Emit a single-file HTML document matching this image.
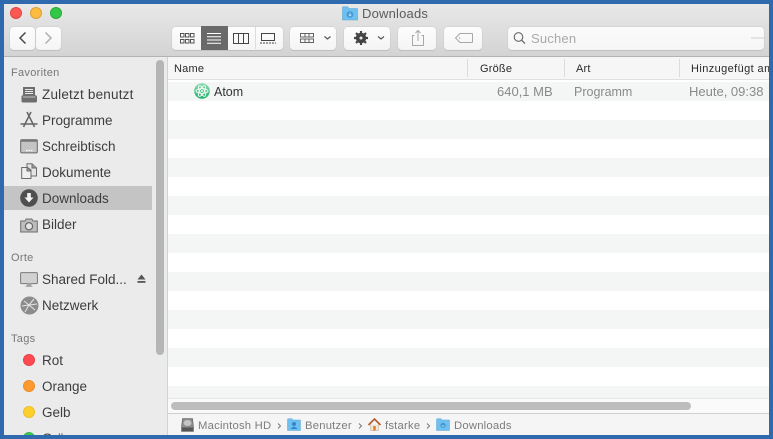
<!DOCTYPE html>
<html><head><meta charset="utf-8">
<style>
*{box-sizing:border-box}
html,body{margin:0;padding:0;width:773px;height:439px;overflow:hidden;background:#2f69ae;font-family:"Liberation Sans",sans-serif}
.a{position:absolute}
#root{position:absolute;left:0;top:0;width:773px;height:439px;overflow:hidden;filter:blur(.25px)}
.btn{position:absolute;top:27px;height:23px;background:linear-gradient(#fdfdfd,#f4f4f4);border-radius:4px;box-shadow:0 0 0 .5px #cbcbcb,0 1px 0 #b5b5b5}
.t{position:absolute;white-space:nowrap;font-size:13.5px;color:#3d3d3d;line-height:16px}
.h{position:absolute;top:62px;font-size:11px;color:#2a2a2a;line-height:14px;white-space:nowrap;letter-spacing:.2px}
.g{position:absolute;font-size:11px;color:#777;line-height:14px;white-space:nowrap;letter-spacing:.3px}
.c{position:absolute;font-size:13px;color:#8a8a8a;line-height:16px;white-space:nowrap;top:84px}
.st{position:absolute;left:168px;width:601px;height:19px;background:#f4f5f5}
.tag{position:absolute;left:23px;width:12px;height:12px;border-radius:50%}
.p{position:absolute;font-size:11.3px;color:#7d7d7d;line-height:14px;white-space:nowrap;top:419px;letter-spacing:.2px}
svg{position:absolute;overflow:visible}
</style></head><body>
<div id="root">
<div class="a" style="left:4px;top:4px;width:765px;height:431px;background:#fff"></div>
<!-- toolbar -->
<div class="a" style="left:4px;top:4px;width:765px;height:53px;background:linear-gradient(#e8e8e8,#d3d3d3);border-bottom:1px solid #b3b3b3"></div>
<div class="a" style="left:10px;top:7px;width:12px;height:12px;border-radius:50%;background:#fc5753;border:.5px solid #df4744"></div>
<div class="a" style="left:30px;top:7px;width:12px;height:12px;border-radius:50%;background:#fdbc40;border:.5px solid #de9f34"></div>
<div class="a" style="left:50px;top:7px;width:12px;height:12px;border-radius:50%;background:#33c748;border:.5px solid #27aa35"></div>
<!-- title -->
<svg style="left:342px;top:6px" width="16" height="15" viewBox="0 0 16 15"><path d="M0.5 3V1.5Q0.5 .8 1.2 .8H5.5L7 2.5H15.5V14H0.5Z" fill="#6fc0ee" stroke="#5aa7d6" stroke-width=".6"/><circle cx="8" cy="8.5" r="3.3" fill="#3f97d6"/><path d="M6.6 8.5 8 10 9.4 8.5M8 6.5V9.5" stroke="#c4e6f8" stroke-width=".8" fill="none"/></svg>
<div class="t" style="left:362px;top:6px;font-size:13px;color:#5c5c5c;letter-spacing:.2px">Downloads</div>
<!-- back/forward -->
<div class="btn" style="left:10px;width:25px"></div>
<div class="btn" style="left:36px;width:25px"></div>
<svg style="left:10px;top:26px" width="52" height="24"><path d="M15.5 6.5 10 12 15.5 17.5" fill="none" stroke="#4a4a4a" stroke-width="1.5"/><path d="M35.5 6.5 41 12 35.5 17.5" fill="none" stroke="#b0b0b0" stroke-width="1.5"/></svg>
<!-- view segment -->
<div class="btn" style="left:172px;width:111px"></div>
<div class="a" style="left:201px;top:26px;width:27px;height:24px;background:#696969"></div>
<div class="a" style="left:255px;top:27px;width:1px;height:22px;background:#dcdcdc"></div>
<svg style="left:172px;top:26px" width="111" height="24">
<g fill="none" stroke="#555" stroke-width="1"><rect x="8.5" y="7.5" width="3.5" height="3.5"/><rect x="13.5" y="7.5" width="3.5" height="3.5"/><rect x="18.5" y="7.5" width="3.5" height="3.5"/><rect x="8.5" y="13.5" width="3.5" height="3.5"/><rect x="13.5" y="13.5" width="3.5" height="3.5"/><rect x="18.5" y="13.5" width="3.5" height="3.5"/></g>
<path d="M35 7.5H49M35 10.8H49M35 14H49M35 17.2H49" stroke="#fff" stroke-width="1"/>
<g fill="none" stroke="#444" stroke-width="1"><rect x="61.5" y="7.5" width="15" height="10"/><path d="M66.5 7.5V17.5M71.5 7.5V17.5"/></g>
<g fill="none" stroke="#444" stroke-width="1"><rect x="89.5" y="7.5" width="13" height="7"/></g><path d="M88 17H104" stroke="#444" stroke-dasharray="2 1"/>
</svg>
<!-- arrange -->
<div class="btn" style="left:290px;width:46px"></div>
<svg style="left:290px;top:26px" width="46" height="24"><g fill="none" stroke="#555" stroke-width=".9"><rect x="10.5" y="7.5" width="13" height="3.5"/><rect x="10.5" y="13" width="13" height="3.5"/><path d="M15 7.5V11M19 7.5V11M15 13V16.5M19 13V16.5"/></g><path d="M34.5 10.5 37.5 13 40.5 10.5" fill="none" stroke="#555" stroke-width="1.2"/></svg>
<!-- action -->
<div class="btn" style="left:344px;width:46px"></div>
<svg style="left:344px;top:26px" width="46" height="24"><circle cx="17" cy="12" r="4" fill="#444" stroke="#444" stroke-width="2.5"/><path d="M17 5V19M10 12H24M12 7 22 17M22 7 12 17" stroke="#444" stroke-width="2.2"/><circle cx="17" cy="12" r="1.5" fill="#e8e8e8"/><path d="M34 10.5 37 13 40 10.5" fill="none" stroke="#555" stroke-width="1.2"/></svg>
<!-- share -->
<div class="btn" style="left:398px;width:38px"></div>
<svg style="left:398px;top:26px" width="38" height="24"><path d="M16.5 9.5H14.5V19.5H25.5V9.5H23.5M20 15V4.5M17.5 7 20 4.5 22.5 7" fill="none" stroke="#a8a8a8" stroke-width="1"/></svg>
<!-- tag -->
<div class="btn" style="left:444px;width:38px"></div>
<svg style="left:444px;top:26px" width="38" height="24"><path d="M11.5 12 16 7.5H28Q28.5 7.5 28.5 8V16Q28.5 16.5 28 16.5H16Z" fill="none" stroke="#a8a8a8" stroke-width="1" stroke-linejoin="round"/><circle cx="15.5" cy="12" r=".8" fill="#a8a8a8"/></svg>
<!-- search -->
<div class="btn" style="left:508px;width:256px;background:linear-gradient(#fbfbfb,#f5f5f5)"></div>
<svg style="left:508px;top:26px" width="256" height="24"><circle cx="10.5" cy="11" r="4.3" fill="none" stroke="#666" stroke-width="1.1"/><path d="M13.6 14.2 17 17.6" stroke="#666" stroke-width="1.3"/><path d="M243 12H256" stroke="#d0d0d0"/></svg>
<div class="t" style="left:531px;top:31px;color:#a9a9a9;font-size:13px;letter-spacing:.2px">Suchen</div>

<!-- sidebar -->
<div class="a" style="left:4px;top:57px;width:163px;height:378px;background:#ebebeb"></div>
<div class="a" style="left:167px;top:57px;width:1px;height:378px;background:#d2d2d2"></div>
<div class="a" style="left:156px;top:60px;width:8px;height:295px;border-radius:4px;background:#b5b5b5"></div>
<div class="a" style="left:4px;top:186px;width:148px;height:24px;background:#c4c4c4"></div>
<div class="g" style="left:11px;top:66px">Favoriten</div>
<div class="g" style="left:11px;top:251px">Orte</div>
<div class="g" style="left:11px;top:332px">Tags</div>
<div class="t" style="left:42px;top:87px;letter-spacing:.2px">Zuletzt benutzt</div>
<div class="t" style="left:42px;top:113px">Programme</div>
<div class="t" style="left:42px;top:139px">Schreibtisch</div>
<div class="t" style="left:42px;top:165px">Dokumente</div>
<div class="t" style="left:42px;top:191px">Downloads</div>
<div class="t" style="left:42px;top:217px">Bilder</div>
<div class="t" style="left:42px;top:272px">Shared Fold...</div>
<div class="t" style="left:42px;top:298px">Netzwerk</div>
<div class="t" style="left:42px;top:353px">Rot</div>
<div class="t" style="left:42px;top:379px">Orange</div>
<div class="t" style="left:42px;top:405px">Gelb</div>
<div class="t" style="left:42px;top:431px">Grün</div>
<!-- sidebar icons -->
<svg style="left:20px;top:85px" width="20" height="20" viewBox="0 0 20 20"><path d="M3 2H15V10L17 11V16Q17 17.5 15 17.5H3Q1.5 17.5 1.5 16V11L3 10Z" fill="#6e6e6e"/><path d="M5 4.5H13M5 6.5H13M5 8.5H13" stroke="#e8e8e8" stroke-width="1"/><path d="M3 12H15.5" stroke="#e8e8e8" stroke-width=".7"/></svg>
<svg style="left:20px;top:111px" width="20" height="18" viewBox="0 0 20 18"><path d="M7 1 14.5 16M11 1 3.5 16M.5 13H17.5" fill="none" stroke="#666" stroke-width="1.5"/></svg>
<svg style="left:20px;top:139px" width="18" height="15" viewBox="0 0 18 15"><rect x=".7" y=".7" width="16.6" height="13.2" rx="1" fill="#c4c4c4" stroke="#666" stroke-width="1"/><rect x="1.2" y="1.2" width="15.6" height="1.5" fill="#6f6f6f"/><path d="M6 11.5H13" stroke="#fff" stroke-width="1.2" stroke-dasharray="1.5 1"/></svg>
<svg style="left:21px;top:163px" width="17" height="17" viewBox="0 0 17 17"><path d="M6 .7H11L15.5 5V13H10V7L6 4Z" fill="#e4e4e4" stroke="#6c6c6c"/><path d="M11 .7V5H15.5" fill="#9a9a9a" stroke="#6c6c6c"/><path d="M.7 4.5H6L10 8V15.5H.7Z" fill="#efefef" stroke="#6c6c6c"/><path d="M6 4.5V8H10" fill="#9a9a9a" stroke="#6c6c6c"/></svg>
<svg style="left:20px;top:189px" width="18" height="18" viewBox="0 0 18 18"><circle cx="9" cy="9" r="8.8" fill="#4f4f4f"/><path d="M7.2 4H10.8V8.5H13.5L9 13.5 4.5 8.5H7.2Z" fill="#f2f2f2"/></svg>
<svg style="left:20px;top:218px" width="18" height="15" viewBox="0 0 18 15"><path d="M.7 3H5L6.2 1H11.8L13 3H17.3V14H.7Z" fill="#bdbdbd" stroke="#6c6c6c"/><circle cx="9" cy="8.3" r="3.6" fill="#e3e3e3" stroke="#666" stroke-width="1.2"/></svg>
<svg style="left:20px;top:272px" width="18" height="16" viewBox="0 0 18 16"><rect x=".6" y=".6" width="16.8" height="11" rx="1" fill="#d2d2d2" stroke="#7a7a7a"/><path d="M7 11.8H11V14H7ZM5.5 14.5H12.5" fill="#a9a9a9" stroke="#a0a0a0" stroke-width=".8"/></svg>
<svg style="left:137px;top:274px" width="9" height="10" viewBox="0 0 9 10"><path d="M4.5 .5 8.5 5.5H.5Z" fill="#555"/><rect x=".5" y="7" width="8" height="1.8" fill="#555"/></svg>
<svg style="left:20px;top:296px" width="19" height="19" viewBox="0 0 19 19"><circle cx="9.5" cy="9.5" r="9" fill="#8c8c8c"/><path d="M4 5 9 9 14 3M9 9 5 16M9 9 15 14M9 9 17 8M2 10 9 9" stroke="#e4e4e4" stroke-width="1" fill="none"/></svg>
<div class="tag" style="top:354px;background:#fc4a51;border:.5px solid #e8414a"></div>
<div class="tag" style="top:380px;background:#fd9a2e;border:.5px solid #ec8d27"></div>
<div class="tag" style="top:406px;background:#fbd02e;border:.5px solid #ecc026"></div>
<div class="tag" style="top:432px;background:#3fc84f;border:.5px solid #34b845"></div>

<!-- list -->
<div class="a" style="left:168px;top:57px;width:601px;height:23px;background:#f6f6f6;border-bottom:1px solid #e0e0e0"></div>
<div class="a" style="left:467px;top:59px;width:1px;height:18px;background:#dcdcdc"></div>
<div class="a" style="left:564px;top:59px;width:1px;height:18px;background:#dcdcdc"></div>
<div class="a" style="left:679px;top:59px;width:1px;height:18px;background:#dcdcdc"></div>
<div class="h" style="left:174px">Name</div>
<div class="h" style="left:480px">Größe</div>
<div class="h" style="left:576px">Art</div>
<div class="a" style="left:691px;top:62px;width:78px;height:14px;overflow:hidden"><div class="h" style="left:0;top:0;letter-spacing:.4px">Hinzugefügt am</div></div>
<div class="st" style="top:82px"></div>
<div class="st" style="top:120px"></div>
<div class="st" style="top:158px"></div>
<div class="st" style="top:196px"></div>
<div class="st" style="top:234px"></div>
<div class="st" style="top:272px"></div>
<div class="st" style="top:310px"></div>
<div class="st" style="top:348px"></div>
<div class="st" style="top:386px;height:12px"></div>
<svg style="left:194px;top:83px" width="16" height="16" viewBox="0 0 16 16"><defs><linearGradient id="ag" x1="0" y1="0" x2="0" y2="1"><stop offset="0" stop-color="#8fdcb0"/><stop offset="1" stop-color="#1fae6c"/></linearGradient></defs><circle cx="8" cy="8" r="7.8" fill="url(#ag)"/><g fill="none" stroke="#eefaf3" stroke-width="1"><ellipse cx="8" cy="8" rx="6" ry="2.4"/><ellipse cx="8" cy="8" rx="6" ry="2.4" transform="rotate(60 8 8)"/><ellipse cx="8" cy="8" rx="6" ry="2.4" transform="rotate(120 8 8)"/></g><circle cx="8" cy="8" r="1" fill="#f2fff8"/></svg>
<div class="c" style="left:214px;color:#333;font-size:12.5px">Atom</div>
<div class="c" style="left:497px">640,1 MB</div>
<div class="c" style="left:574px;font-size:12.5px">Programm</div>
<div class="c" style="left:689px">Heute, 09:38</div>
<!-- h scrollbar -->
<div class="a" style="left:168px;top:398px;width:601px;height:15px;background:#fafafa;border-top:1px solid #e6e6e6"></div>
<div class="a" style="left:171px;top:402px;width:520px;height:8px;border-radius:4px;background:#bdbdbd"></div>
<!-- path bar -->
<div class="a" style="left:168px;top:413px;width:601px;height:22px;background:#f5f5f5;border-top:1px solid #cfcfcf"></div>
<svg style="left:181px;top:418px" width="13" height="14" viewBox="0 0 13 14"><path d="M1.5 .5H11.5L12.5 9V13.5H.5V9Z" fill="#8b8b8b" stroke="#5e5e5e" stroke-width=".6"/><ellipse cx="6.5" cy="5" rx="4" ry="3" fill="#c4c4c4"/><rect x="1" y="9.5" width="11" height="3.5" fill="#555"/></svg>
<div class="p" style="left:198px">Macintosh HD</div>
<svg style="left:277px;top:422px" width="5" height="8"><path d="M1 1.5 3.5 4 1 6.5" fill="none" stroke="#777" stroke-width="1"/></svg>
<svg style="left:287px;top:418px" width="14" height="13" viewBox="0 0 14 13"><path d="M.5 2.5V1.3Q.5 .7 1.2 .7H5L6 2H13.5V12.5H.5Z" fill="#6fc0ee" stroke="#5aa7d6" stroke-width=".5"/><circle cx="7" cy="6" r="2" fill="#2f86c9"/><path d="M3.5 11Q7 6.5 10.5 11Z" fill="#2f86c9"/></svg>
<div class="p" style="left:305px">Benutzer</div>
<svg style="left:358px;top:422px" width="5" height="8"><path d="M1 1.5 3.5 4 1 6.5" fill="none" stroke="#777" stroke-width="1"/></svg>
<svg style="left:368px;top:418px" width="13" height="13" viewBox="0 0 13 13"><path d="M2.5 6.5V12.5H10.5V6.5" fill="#efe6d6" stroke="#b9a88c" stroke-width=".5"/><path d="M.5 7 6.5 1 12.5 7" fill="none" stroke="#b3592a" stroke-width="1.6"/><rect x="5.3" y="8" width="2.4" height="4.5" fill="#d9792e"/></svg>
<div class="p" style="left:385px">fstarke</div>
<svg style="left:426px;top:422px" width="5" height="8"><path d="M1 1.5 3.5 4 1 6.5" fill="none" stroke="#777" stroke-width="1"/></svg>
<svg style="left:436px;top:418px" width="14" height="13" viewBox="0 0 14 13"><path d="M.5 2.5V1.3Q.5 .7 1.2 .7H5L6 2H13.5V12.5H.5Z" fill="#6fc0ee" stroke="#5aa7d6" stroke-width=".5"/><circle cx="7" cy="7.3" r="2.6" fill="#3f97d6"/><path d="M5.8 7.3 7 8.6 8.2 7.3" stroke="#c4e6f8" stroke-width=".7" fill="none"/></svg>
<div class="p" style="left:454px">Downloads</div>
<!-- frame -->
<div class="a" style="left:0;top:0;width:773px;height:4px;background:#2f69ae"></div>
<div class="a" style="left:0;top:435px;width:773px;height:4px;background:#2f69ae"></div>
<div class="a" style="left:0;top:0;width:4px;height:439px;background:#2f69ae"></div>
<div class="a" style="left:769px;top:0;width:4px;height:439px;background:#2f69ae"></div>
</div>
</body></html>
